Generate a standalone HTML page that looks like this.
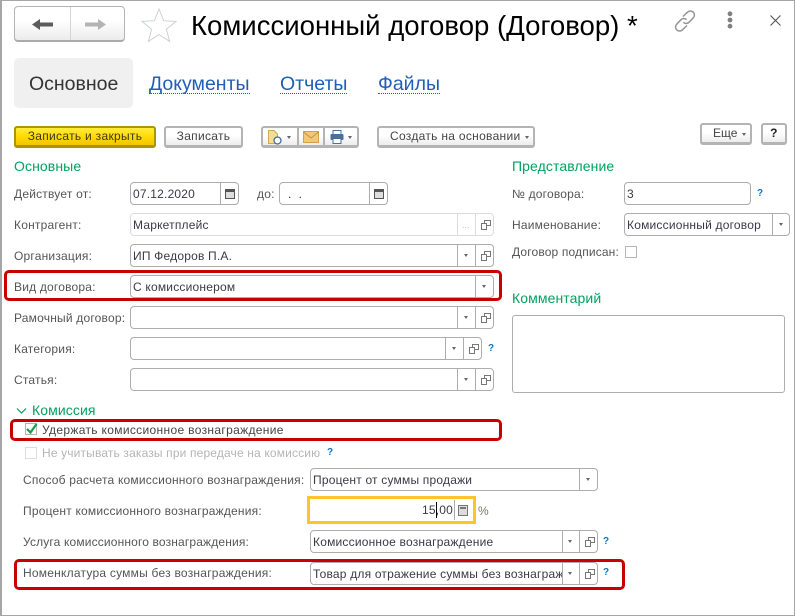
<!DOCTYPE html>
<html lang="ru"><head><meta charset="utf-8"><title>Комиссионный договор</title>
<style>
html,body{margin:0;padding:0;background:#fff}
#w{position:relative;width:795px;height:616px;overflow:hidden;background:#fff;font-family:"Liberation Sans",Arial,sans-serif;font-size:12px;color:#4b4b4b;box-sizing:border-box;border:1px solid #a6a6a6;border-width:1px 1px 1px 2px}
#w>*{position:absolute}
#r{position:absolute;left:-2px;top:-1px;width:795px;height:616px}
#r>*{position:absolute;white-space:nowrap}
.l{font-size:12px;line-height:14px;color:#555;letter-spacing:.2px}
.h{font-size:14px;line-height:16px;color:#00a35f;letter-spacing:.1px}
.f{box-sizing:border-box;height:23px;border:1px solid #adadad;border-radius:4px;background:#fff;color:#3a3a48;font-size:12px;line-height:22px;padding-left:2px;letter-spacing:.2px;overflow:hidden}
.s{width:1px;background:#adadad;height:23px}
.arr{width:0;height:0;border-left:2.5px solid transparent;border-right:2.5px solid transparent;border-top:3px solid #666}
.q{color:#0a76c4;font-size:10px;font-weight:bold;line-height:12px}
.red{box-sizing:border-box;border:3px solid #c80000;border-radius:5px}
.b{box-sizing:border-box;height:22px;border:2px solid #b4b4b4;border-bottom-width:3px;border-radius:3px;background:linear-gradient(#fff 45%,#ececec);text-align:center;color:#444;font-size:12px;line-height:17px;letter-spacing:.3px}
.t{font-size:19.5px;line-height:22px;color:#1f5fb8;border-bottom:1px dotted #1f5fb8;height:20px}
.cb{box-sizing:border-box;width:12px;height:12px;border:1px solid #b5b5b5;background:#fff}
</style></head><body>
<div id="w"><div id="r">

<!-- nav -->
<div style="left:14px;top:6px;width:111px;height:36px;box-sizing:border-box;border:1px solid #b4b4b4;border-bottom:2px solid #aaa;border-radius:4px;background:linear-gradient(#fff 40%,#ececec)"></div>
<div style="left:70px;top:7px;width:1px;height:33px;background:#d4d4d4"></div>
<svg style="left:30px;top:17px" width="80" height="16" viewBox="0 0 80 16"><path d="M2 7.5 L10 2 V5.5 H23 V9.5 H10 V13 Z" fill="#5c5c5c"/><path d="M76 7.5 L68 2 V5.5 H55 V9.5 H68 V13 Z" fill="#b4b4b4"/></svg>
<svg style="left:140px;top:7px" width="38" height="36" viewBox="0 0 38 36"><path d="M19 2 L23.6 13.7 L36 14.4 L26.4 22.3 L29.6 34.4 L19 27.6 L8.4 34.4 L11.6 22.3 L2 14.4 L14.4 13.7 Z" fill="#fff" stroke="#cdd1d5" stroke-width="1"/></svg>
<div style="left:191px;top:9px;font-size:27.55px;line-height:34px;color:#000">Комиссионный договор (Договор) *</div>

<svg style="left:672px;top:8px" width="26" height="26" viewBox="0 0 26 26" fill="none" stroke="#959595" stroke-width="1.5"><path d="M11 8.5 L15.5 4.2 a4 4 0 0 1 5.8 5.6 L17 14.3 a4 4 0 0 1-5.6 0"/><path d="M15 17.5 L10.5 21.8 a4 4 0 0 1-5.8-5.6 L9 11.7 a4 4 0 0 1 5.6 0"/></svg>
<svg style="left:725px;top:11px" width="10" height="18" viewBox="0 0 10 18" fill="#808080"><circle cx="5" cy="2.8" r="2.4"/><circle cx="5" cy="9" r="2.4"/><circle cx="5" cy="15.2" r="2.4"/></svg>
<svg style="left:770px;top:15px" width="11" height="11" viewBox="0 0 11 11" stroke="#555" stroke-width="1.1"><path d="M.5 .5 L10.5 10.5 M10.5 .5 L.5 10.5"/></svg>

<!-- tabs -->
<div style="left:14px;top:58px;width:119px;height:50px;background:#f0f0f0;border-radius:5px"></div>
<div style="left:29px;top:73px;font-size:19.5px;line-height:22px;color:#333">Основное</div>
<div class="t" style="left:149px;top:73px">Документы</div>
<div class="t" style="left:280px;top:73px">Отчеты</div>
<div class="t" style="left:378px;top:73px">Файлы</div>

<!-- command bar -->
<div class="b" style="left:14px;top:126px;width:142px;border-color:#ab9500;background:linear-gradient(#ffec3d,#ffd900 55%,#f4c400);color:#3d3a10">Записать и закрыть</div>
<div class="b" style="left:164px;top:126px;width:79px">Записать</div>
<div class="b" style="left:261px;top:126px;width:98px"></div>
<div style="left:297px;top:128px;width:2px;height:17px;background:#b4b4b4"></div>
<div style="left:323px;top:128px;width:2px;height:17px;background:#b4b4b4"></div>
<svg style="left:268px;top:130px" width="14" height="15" viewBox="0 0 14 15"><path d="M.5.5H6L9.5 4V13.5H.5Z" fill="#f3dc96" stroke="#cfaa4a"/><circle cx="9.5" cy="10.5" r="3.5" fill="#fff" stroke="#3e6d9f" stroke-width="1.3"/></svg>
<div class="arr" style="left:287px;top:136px"></div>
<svg style="left:303px;top:131px" width="16" height="12" viewBox="0 0 16 12"><rect x=".5" y=".5" width="15" height="11" fill="#f2c77a" stroke="#d89f45"/><path d="M.5 1 L8 7 L15.5 1" fill="none" stroke="#c98f3a"/></svg>
<svg style="left:330px;top:130px" width="14" height="14" viewBox="0 0 14 14"><rect x="3" y=".5" width="8" height="4" fill="#fff" stroke="#4a6f97"/><rect x=".5" y="4" width="13" height="6" rx="1" fill="#48709b"/><rect x="3" y="8.5" width="8" height="5" fill="#fff" stroke="#4a6f97"/></svg>
<div class="arr" style="left:348px;top:136px"></div>
<div class="b" style="left:377px;top:126px;width:158px;text-align:left;padding-left:11px">Создать на основании</div>
<div class="arr" style="left:525px;top:136px"></div>
<div class="b" style="left:700px;top:123px;width:52px;text-align:left;padding-left:11px;letter-spacing:0">Еще</div>
<div class="arr" style="left:742px;top:133px"></div>
<div class="b" style="left:761px;top:123px;width:26px;font-weight:bold;color:#222">?</div>

<!-- left col -->
<div class="h" style="left:14px;top:158px">Основные</div>
<div class="h" style="left:512px;top:158px">Представление</div>

<div class="l" style="left:14px;top:187px">Действует от:</div>
<div class="f" style="left:130px;top:182px;width:109px">07.12.2020</div>
<div class="s" style="left:220px;top:182px"></div>
<svg style="left:225px;top:188px" width="10" height="11" viewBox="0 0 10 11"><rect x=".5" y="1.5" width="9" height="9" fill="#ddd" stroke="#555"/><rect x="1" y="1" width="8" height="3" fill="#555"/></svg>
<div class="l" style="left:257px;top:187px">до:</div>
<div class="f" style="left:279px;top:182px;width:109px;padding-left:8px">. &nbsp;.</div>
<div class="s" style="left:369px;top:182px"></div>
<svg style="left:374px;top:188px" width="10" height="11" viewBox="0 0 10 11"><rect x=".5" y="1.5" width="9" height="9" fill="#ddd" stroke="#555"/><rect x="1" y="1" width="8" height="3" fill="#555"/></svg>

<div class="l" style="left:14px;top:218px">Контрагент:</div>
<div class="f" style="left:130px;top:213px;width:364px;border-color:#dcdcdc">Маркетплейс</div>
<div class="s" style="left:457px;top:213px;background:#dcdcdc"></div>
<div class="s" style="left:475px;top:213px;background:#dcdcdc"></div>
<div style="left:462px;top:219px;color:#bbb;font-size:9px;line-height:12px">...</div>
<svg style="left:481px;top:220px" width="10" height="10" viewBox="0 0 10 10" fill="none" stroke="#777"><rect x="3.5" y=".5" width="6" height="5"/><rect x=".5" y="3.5" width="5" height="6" fill="#fff"/></svg>

<div class="l" style="left:14px;top:249px">Организация:</div>
<div class="f" style="left:130px;top:244px;width:364px">ИП Федоров П.А.</div>
<div class="s" style="left:457px;top:244px"></div>
<div class="s" style="left:475px;top:244px"></div>
<div class="arr" style="left:464px;top:254px"></div>
<svg style="left:481px;top:251px" width="10" height="10" viewBox="0 0 10 10" fill="none" stroke="#777"><rect x="3.5" y=".5" width="6" height="5"/><rect x=".5" y="3.5" width="5" height="6" fill="#fff"/></svg>

<div class="red" style="left:4px;top:270px;width:498px;height:31px"></div>
<div class="l" style="left:14px;top:280px">Вид договора:</div>
<div class="f" style="left:130px;top:275px;width:364px">С комиссионером</div>
<div class="s" style="left:475px;top:275px"></div>
<div class="arr" style="left:482px;top:285px"></div>

<div class="l" style="left:14px;top:311px">Рамочный договор:</div>
<div class="f" style="left:130px;top:306px;width:364px"></div>
<div class="s" style="left:457px;top:306px"></div>
<div class="s" style="left:475px;top:306px"></div>
<div class="arr" style="left:464px;top:316px"></div>
<svg style="left:481px;top:313px" width="10" height="10" viewBox="0 0 10 10" fill="none" stroke="#777"><rect x="3.5" y=".5" width="6" height="5"/><rect x=".5" y="3.5" width="5" height="6" fill="#fff"/></svg>

<div class="l" style="left:14px;top:342px">Категория:</div>
<div class="f" style="left:130px;top:337px;width:352px"></div>
<div class="s" style="left:445px;top:337px"></div>
<div class="s" style="left:463px;top:337px"></div>
<div class="arr" style="left:452px;top:347px"></div>
<svg style="left:469px;top:344px" width="10" height="10" viewBox="0 0 10 10" fill="none" stroke="#777"><rect x="3.5" y=".5" width="6" height="5"/><rect x=".5" y="3.5" width="5" height="6" fill="#fff"/></svg>
<div class="q" style="left:488px;top:343px">?</div>

<div class="l" style="left:14px;top:373px">Статья:</div>
<div class="f" style="left:130px;top:368px;width:364px"></div>
<div class="s" style="left:457px;top:368px"></div>
<div class="s" style="left:475px;top:368px"></div>
<div class="arr" style="left:464px;top:378px"></div>
<svg style="left:481px;top:375px" width="10" height="10" viewBox="0 0 10 10" fill="none" stroke="#777"><rect x="3.5" y=".5" width="6" height="5"/><rect x=".5" y="3.5" width="5" height="6" fill="#fff"/></svg>

<!-- Комиссия -->
<svg style="left:16px;top:407px" width="11" height="8" viewBox="0 0 11 8" fill="none" stroke="#00a35f" stroke-width="1.2"><path d="M1 1.5 L5.5 6 L10 1.5"/></svg>
<div class="h" style="left:32px;top:402px">Комиссия</div>
<div class="red" style="left:10px;top:419px;width:492px;height:22px"></div>
<div class="cb" style="left:25px;top:423px"></div>
<svg style="left:25px;top:421px" width="15" height="14" viewBox="0 0 15 14" fill="none" stroke="#14a04f" stroke-width="2.2"><path d="M2 8 L5.5 11.5 L11.5 3"/></svg>
<div class="l" style="left:42px;top:423px;color:#444;letter-spacing:.33px">Удержать комиссионное вознаграждение</div>
<div class="cb" style="left:25px;top:447px;border-color:#ddd"></div>
<div class="l" style="left:42px;top:446px;color:#b5b5b5;letter-spacing:.15px">Не учитывать заказы при передаче на комиссию</div>
<div class="q" style="left:327px;top:447px">?</div>

<div class="l" style="left:23px;top:473px">Способ расчета комиссионного вознаграждения:</div>
<div class="f" style="left:310px;top:468px;width:288px">Процент от суммы продажи</div>
<div class="s" style="left:579px;top:468px"></div>
<div class="arr" style="left:586px;top:478px"></div>

<div class="l" style="left:23px;top:504px">Процент комиссионного вознаграждения:</div>
<div style="left:307px;top:496px;width:169px;height:28px;box-sizing:border-box;border:3px solid #fcc52d;background:#fff"></div>
<div style="left:390px;top:503px;width:63px;text-align:right;color:#3a3a48;font-size:12px;line-height:14px;letter-spacing:.2px">15,00</div>
<div style="left:436px;top:502px;width:1px;height:16px;background:#000"></div>
<div style="left:454px;top:500px;width:1px;height:20px;background:#adadad"></div>
<svg style="left:458px;top:505px" width="10" height="11" viewBox="0 0 10 11"><rect x=".5" y=".5" width="9" height="10" fill="#ddd" stroke="#777"/><rect x="2" y="2" width="6" height="2" fill="#777"/></svg>
<div class="l" style="left:478px;top:504px;color:#7a7a6a">%</div>

<div class="l" style="left:23px;top:535px;letter-spacing:.15px">Услуга комиссионного вознаграждения:</div>
<div class="f" style="left:310px;top:530px;width:288px">Комиссионное вознаграждение</div>
<div class="s" style="left:562px;top:530px"></div>
<div class="s" style="left:579px;top:530px"></div>
<div class="arr" style="left:568px;top:540px"></div>
<svg style="left:585px;top:537px" width="10" height="10" viewBox="0 0 10 10" fill="none" stroke="#777"><rect x="3.5" y=".5" width="6" height="5"/><rect x=".5" y="3.5" width="5" height="6" fill="#fff"/></svg>
<div class="q" style="left:603px;top:536px">?</div>

<div class="red" style="left:14px;top:559px;width:611px;height:31px"></div>
<div class="l" style="left:23px;top:566px;letter-spacing:.23px">Номенклатура суммы без вознаграждения:</div>
<div class="f" style="left:310px;top:562px;width:288px"><span style="display:block;overflow:hidden;width:250px">Товар для отражение суммы без вознаграждения</span></div>
<div class="s" style="left:562px;top:562px"></div>
<div class="s" style="left:579px;top:562px"></div>
<div class="arr" style="left:568px;top:572px"></div>
<svg style="left:585px;top:569px" width="10" height="10" viewBox="0 0 10 10" fill="none" stroke="#777"><rect x="3.5" y=".5" width="6" height="5"/><rect x=".5" y="3.5" width="5" height="6" fill="#fff"/></svg>
<div class="q" style="left:603px;top:567px">?</div>

<!-- right col -->
<div class="l" style="left:512px;top:187px">№ договора:</div>
<div class="f" style="left:624px;top:182px;width:127px">3</div>
<div class="q" style="left:757px;top:188px">?</div>
<div class="l" style="left:512px;top:218px">Наименование:</div>
<div class="f" style="left:624px;top:213px;width:166px">Комиссионный договор</div>
<div class="s" style="left:772px;top:213px"></div>
<div class="arr" style="left:779px;top:223px"></div>
<div class="l" style="left:512px;top:245px;letter-spacing:.15px">Договор подписан:</div>
<div class="cb" style="left:625px;top:246px"></div>
<div class="h" style="left:512px;top:290px">Комментарий</div>
<div style="left:512px;top:315px;width:273px;height:78px;box-sizing:border-box;border:1px solid #adadad;border-radius:3px"></div>

</div></div>
</body></html>
